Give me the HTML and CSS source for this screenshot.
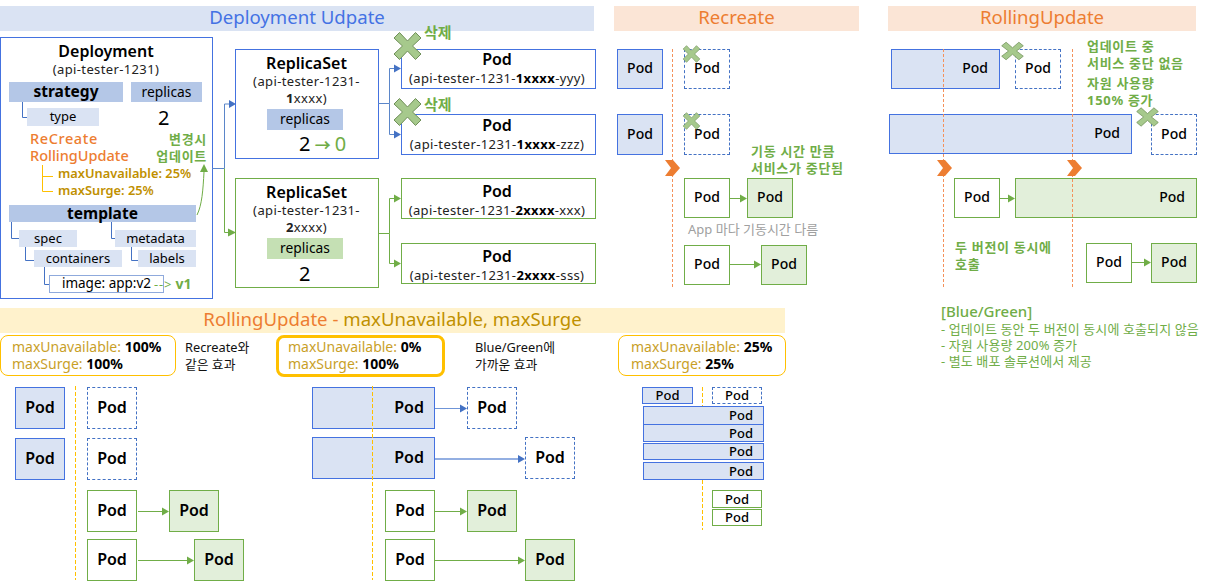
FILE: index.html
```html
<!DOCTYPE html>
<html lang="ko">
<head>
<meta charset="utf-8">
<title>Deployment Update</title>
<link rel="stylesheet" href="styles.css">
</head>
<body>
<div class="stage">
  <header class="title-row">
    <h2 class="title t-deploy">Deployment Udpate</h2>
    <h2 class="title t-recreate">Recreate</h2>
    <h2 class="title t-rolling">RollingUpdate</h2>
  </header>
  <h2 class="title t-params"><span class="orange">RollingUpdate - </span><span class="gold">maxUnavailable, maxSurge</span></h2>

  <div class="canvas">
    <!-- Deployment tree -->
    <div class="box blue-line deployment"></div>
    <div class="txt head dp-name">Deployment</div>
    <div class="txt sub dp-sub">(api-tester-1231)</div>
    <div class="bar mid strategy">strategy</div>
    <div class="bar mid-thin replicas-a">replicas</div>
    <div class="bar light type">type</div>
    <div class="txt big two-a">2</div>
    <div class="txt orange-t recreate">ReCreate</div>
    <div class="txt orange-t rolling">RollingUpdate</div>
    <div class="txt note note-change">변경시<br>업데이트</div>
    <div class="txt gold-b mu">maxUnavailable: 25%</div>
    <div class="txt gold-b ms">maxSurge: 25%</div>
    <div class="bar mid template">template</div>
    <div class="bar light spec">spec</div>
    <div class="bar light metadata">metadata</div>
    <div class="bar light containers">containers</div>
    <div class="bar light labels">labels</div>
    <div class="bar image">image: app:v2</div>
    <div class="txt v1"><span>--&gt;</span> <b>v1</b></div>

    <!-- ReplicaSets -->
    <div class="box blue-line rs rs1"></div>
    <div class="txt head rs-name rs1-name">ReplicaSet</div>
    <div class="txt sub rs-sub rs1-sub">(api-tester-1231-<br><b>1</b>xxxx)</div>
    <div class="bar mid-thin rs-rep rs1-rep">replicas</div>
    <div class="txt big count-a">2 <span class="grn-arrow">→</span> <span class="grn">0</span></div>

    <div class="box green-line rs rs2"></div>
    <div class="txt head rs-name rs2-name">ReplicaSet</div>
    <div class="txt sub rs-sub rs2-sub">(api-tester-1231-<br><b>2</b>xxxx)</div>
    <div class="bar green-bar rs-rep rs2-rep">replicas</div>
    <div class="txt big count-b">2</div>

    <!-- Pods of the ReplicaSets -->
    <div class="box blue-line lp lp1"><b>Pod</b><span>(api-tester-1231-<em>1xxxx</em>-yyy)</span></div>
    <div class="box blue-line lp lp2"><b>Pod</b><span>(api-tester-1231-<em>1xxxx</em>-zzz)</span></div>
    <div class="box green-line lp lp3"><b>Pod</b><span>(api-tester-1231-<em>2xxxx</em>-xxx)</span></div>
    <div class="box green-line lp lp4"><b>Pod</b><span>(api-tester-1231-<em>2xxxx</em>-sss)</span></div>
    <div class="txt note del del1">삭제</div>
    <div class="txt note del del2">삭제</div>

    <!-- Recreate -->
    <div class="pod old a1">Pod</div>
    <div class="pod old a2">Pod</div>
    <div class="pod gone a3">Pod</div>
    <div class="pod gone a4">Pod</div>
    <div class="pod next a5">Pod</div>
    <div class="pod new a6">Pod</div>
    <div class="pod next a7">Pod</div>
    <div class="pod new a8">Pod</div>
    <div class="txt note note-down">기동 시간 만큼<br>서비스가 중단됨</div>
    <div class="txt gray-note">App 마다 기동시간 다름</div>

    <!-- RollingUpdate -->
    <div class="pod old wide b1">Pod</div>
    <div class="pod gone b2">Pod</div>
    <div class="pod old wide b3">Pod</div>
    <div class="pod gone b4">Pod</div>
    <div class="pod next b5">Pod</div>
    <div class="pod new wide b6">Pod</div>
    <div class="pod next b7">Pod</div>
    <div class="pod new b8">Pod</div>
    <div class="txt note note-up">업데이트 중<br>서비스 중단 없음</div>
    <div class="txt note note-res">자원 사용량<br>150% 증가</div>
    <div class="txt note note-two">두 버전이 동시에<br>호출</div>
    <div class="txt bg-title">[Blue/Green]</div>
    <div class="txt bg-list">- 업데이트 동안 두 버전이 동시에 호출되지 않음<br>- 자원 사용량 200% 증가<br>- 별도 배포 솔루션에서 제공</div>

    <!-- Parameter cards -->
    <div class="card c1"><p><span>maxUnavailable:</span> <b>100%</b></p><p><span>maxSurge:</span> <b>100%</b></p></div>
    <div class="txt remark r1">Recreate와<br>같은 효과</div>
    <div class="card strong c2"><p><span>maxUnavailable:</span> <b>0%</b></p><p><span>maxSurge:</span> <b>100%</b></p></div>
    <div class="txt remark r2">Blue/Green에<br>가까운 효과</div>
    <div class="card c3"><p><span>maxUnavailable:</span> <b>25%</b></p><p><span>maxSurge:</span> <b>25%</b></p></div>

    <!-- Scenario 100/100 -->
    <div class="pod lg old d1">Pod</div>
    <div class="pod lg old d2">Pod</div>
    <div class="pod lg gone d3">Pod</div>
    <div class="pod lg gone d4">Pod</div>
    <div class="pod lg next d5">Pod</div>
    <div class="pod lg new d6">Pod</div>
    <div class="pod lg next d7">Pod</div>
    <div class="pod lg new d8">Pod</div>

    <!-- Scenario 0/100 -->
    <div class="pod lg old wide e1">Pod</div>
    <div class="pod lg gone e2">Pod</div>
    <div class="pod lg old wide e3">Pod</div>
    <div class="pod lg gone e4">Pod</div>
    <div class="pod lg next e5">Pod</div>
    <div class="pod lg new e6">Pod</div>
    <div class="pod lg next e7">Pod</div>
    <div class="pod lg new e8">Pod</div>

    <!-- Scenario 25/25 -->
    <div class="pod sm old f1">Pod</div>
    <div class="pod sm gone f2">Pod</div>
    <div class="pod sm old wide f3">Pod</div>
    <div class="pod sm old wide f4">Pod</div>
    <div class="pod sm old wide f5">Pod</div>
    <div class="pod sm old wide f6">Pod</div>
    <div class="pod sm next f7">Pod</div>
    <div class="pod sm next f8">Pod</div>

    <!-- Connectors, timelines and marks -->
    <svg class="wires" width="1230" height="583" viewBox="0 0 1230 583" aria-hidden="true">
      <defs>
        <path id="x2" d="M-8 -13.5 L0 -5 L8 -13.5 L13.5 -8 L5 0 L13.5 8 L8 13.5 L0 5 L-8 13.5 L-13.5 8 L-5 0 L-13.5 -8 Z"/>
        <path id="chev" d="M0 0 H8 L15 8 L8 16 H0 L6 8 Z"/>
      </defs>

      <g class="s-blue">
        <path d="M22.5 102V117.5H27M11.5 222V238.5H19M111.5 222V238.5H115M25.5 247V260.5H34M131.5 247V260.5H138M44.5 267V284.5H49"/>
      </g>
      <g class="s-yellow"><path d="M42.5 165V191.5H53M42.5 176.5H53"/></g>
      <path class="s-green-line" d="M197 215C202 205 203 190 204 172"/>
      <path class="f-green" d="M204 164L208 172H200Z"/>

      <path class="s-steel" d="M212 168.5H224.5V104H229"/>
      <path class="f-steel" d="M229 100L236 104L229 108Z"/>
      <path class="s-green-line" d="M224.5 168.5V232.5H229"/>
      <path class="f-green" d="M228 228.5L236 232.5L228 236.5Z"/>

      <path class="s-steel" d="M378 103.5H389.5V68.5H394M389.5 103.5V134.5H394"/>
      <path class="f-steel" d="M394 64.5L401 68.5L394 72.5ZM394 130.5L401 134.5L394 138.5Z"/>
      <path class="s-green-line" d="M378 233.5H389.5V198.5H394M389.5 233.5V263.5H394"/>
      <path class="f-green" d="M394 194.5L401 198.5L394 202.5ZM394 259.5L401 263.5L394 267.5Z"/>

      <g class="s-orange-dash">
        <path d="M672.5 49V287M943.5 49V287M1072.5 49V287"/>
      </g>
      <g class="s-yellow-dash">
        <path d="M75.5 386V580M372.5 386V580M702.5 387V406M702.5 480V530"/>
      </g>

      <g class="s-green-line">
        <path d="M730 198.5H741M730 264.5H755M1000 198.5H1009M1132 262.5H1145M138 511.5H163M138 560.5H188M435 511.5H461M435 560.5H519"/>
      </g>
      <g class="f-green">
        <path d="M740 194.5L747 198.5L740 202.5ZM754 260.5L761 264.5L754 268.5ZM1008 194.5L1015 198.5L1008 202.5ZM1144 258.5L1151 262.5L1144 266.5ZM162 507.5L169 511.5L162 515.5ZM187 556.5L194 560.5L187 564.5ZM460 507.5L467 511.5L460 515.5ZM518 556.5L525 560.5L518 564.5Z"/>
      </g>
      <path class="s-arrow-blue" d="M435 408.5H461"/>
      <path class="s-arrow-blue thick" d="M435 459H519"/>
      <path class="f-steel" d="M460 404.5L467 408.5L460 412.5ZM518 455L525 459L518 463Z"/>

      <g class="f-orange">
        <use href="#chev" x="665" y="160"/>
        <use href="#chev" x="937" y="160"/>
        <use href="#chev" x="1067" y="160"/>
      </g>

      <g class="f-cross">
        <use href="#x2" transform="translate(407.5 46)"/>
        <use href="#x2" transform="translate(407.5 112)"/>
        <use href="#x2" transform="translate(691.5 54) scale(.62)"/>
        <use href="#x2" transform="translate(691.5 121) scale(.62)"/>
        <use href="#x2" transform="translate(1012.5 51) scale(.8 .65)"/>
        <use href="#x2" transform="translate(1147.5 117) scale(.8 .68)"/>
      </g>
    </svg>
  </div>
</div>
</body>
</html>
```

FILE: styles.css
```css
* { box-sizing: border-box; margin: 0; padding: 0; }
html, body { background: #fff; }
body {
  font-family: "Noto Sans", "Noto Sans CJK KR", sans-serif;
  color: #000;
  overflow: hidden;
}
.stage { position: relative; width: 1230px; height: 583px; overflow: hidden; }

/* Section titles */
.title-row { display: flex; padding-top: 6px; }
.title {
  height: 25px;
  font-size: 18.6px;
  font-weight: 400;
  line-height: 22px;
  text-align: center;
}
.t-deploy { width: 594px; background: #dae3f3; color: #4472e4; }
.t-recreate { width: 245px; margin-left: 20px; background: #fbe5d6; color: #ed7d31; }
.t-rolling { width: 308px; margin-left: 29px; background: #fbe5d6; color: #ed7d31; }
.t-params { width: 785px; margin-top: 277px; background: #fff2cc; }
.orange { color: #ed7d31; }
.gold { color: #bf9000; }

/* Free diagram canvas */
.canvas { position: absolute; inset: 0; }
.canvas > * { position: absolute; }
.wires { left: 0; top: 0; pointer-events: none; fill: none; }

.txt { white-space: nowrap; }
.head { font-size: 16px; font-weight: 600; line-height: 20px; text-align: center; }
.sub { font-size: 13px; letter-spacing: .37px; line-height: 17px; text-align: center; color: #222; }
.big { font-size: 20px; line-height: 24px; }
.orange-t { font-size: 14.5px; line-height: 16px; color: #ed7d31; font-weight: 500; left: 30px; }
.note { font-size: 13px; letter-spacing: .7px; font-weight: 700; line-height: 16.5px; color: #70ad47; }
.gold-b { font-size: 12.8px; font-weight: 600; line-height: 16px; color: #bf9000; left: 58px; }

.box { border: 1px solid; background: #fff; }
.blue-line { border-color: #4472e0; }
.green-line { border-color: #70ad47; }

.bar { display: flex; align-items: center; justify-content: center; white-space: nowrap; padding-bottom: 2px; }
.mid { background: #b4c7e7; font-size: 15.5px; font-weight: 700; }
.mid-thin { background: #b4c7e7; font-size: 13.8px; }
.light { background: #dae3f3; font-size: 13px; }
.green-bar { background: #c5e0b4; font-size: 13.8px; }

/* Deployment */
.deployment { left: 0; top: 37px; width: 213px; height: 262px; background: transparent; }
.dp-name { left: 0; width: 212px; top: 41px; }
.dp-sub { left: 0; width: 212px; top: 61px; }
.strategy { left: 9px; top: 82px; width: 114px; height: 20px; }
.replicas-a { left: 131px; top: 82px; width: 71px; height: 20px; }
.type { left: 27px; top: 108px; width: 72px; height: 18px; }
.two-a { left: 158px; top: 106px; }
.recreate { top: 130px; letter-spacing: .6px; }
.rolling { top: 147px; }
.note-change { right: 1023px; top: 131px; text-align: right; }
.mu { top: 165px; }
.ms { top: 182px; }
.template { left: 9px; top: 205px; width: 187px; height: 17px; }
.spec { left: 19px; top: 230px; width: 58px; height: 17px; }
.metadata { left: 115px; top: 230px; width: 81px; height: 17px; }
.containers { left: 34px; top: 250px; width: 88px; height: 17px; }
.labels { left: 138px; top: 250px; width: 58px; height: 17px; }
.image {
  left: 49px; top: 275px; width: 115px; height: 18px;
  border: 1px solid #8faadc; background: #fff; font-size: 13.5px;
}
.v1 { left: 154px; top: 275px; font-size: 13px; line-height: 18px; color: #70ad47; font-variant-ligatures: none; }
.v1 span { letter-spacing: .8px; }
.v1 b { font-size: 14px; }

/* ReplicaSets */
.rs { left: 235px; width: 144px; height: 110px; }
.rs1 { top: 49px; }
.rs2 { top: 178px; }
.rs-name, .rs-sub { left: 235px; width: 143px; }
.rs1-name { top: 53px; }
.rs1-sub { top: 73px; }
.rs2-name { top: 182px; }
.rs2-sub { top: 202px; }
.rs-rep { left: 267px; width: 76px; height: 21px; }
.rs1-rep { top: 109px; }
.rs2-rep { top: 238px; }
.count-a { left: 299px; top: 132px; word-spacing: -1px; }
.count-b { left: 299px; top: 262px; }
.grn { color: #70ad47; }
.grn-arrow { color: #70ad47; font-size: 16px; font-weight: 700; }

/* Pods of the ReplicaSets */
.lp {
  left: 401px; width: 195px;
  display: flex; flex-direction: column; align-items: center;
  padding-right: 3px;
}
.lp b { font-size: 16px; line-height: 19px; font-weight: 600; }
.lp span { font-size: 13px; letter-spacing: .37px; line-height: 18px; color: #222; }
.lp em { font-style: normal; font-weight: 700; color: #000; }
.lp1 { top: 49px; height: 40px; }
.lp2 { top: 114px; height: 41px; padding-top: 1px; }
.lp3 { top: 178px; height: 41px; padding-top: 3px; }
.lp4 { top: 243px; height: 41px; padding-top: 3px; }
.del { left: 424px; font-size: 15px; letter-spacing: 0; line-height: 18px; }
.del1 { top: 23px; }
.del2 { top: 95px; }

/* Pod states */
.pod {
  display: flex; align-items: center; justify-content: center;
  width: 46px; height: 40px;
  border: 1px solid #4472e0;
  background: #fff;
  font-size: 14px;
  font-weight: 500;
  padding-bottom: 3px;
}
.old { background: #dae3f3; }
.gone { border: 1px dashed #4472c4; background: transparent; }
.next { border-color: #70ad47; }
.new { border-color: #70ad47; background: #e2efda; }
.wide { justify-content: flex-end; padding-right: 11px; }
.lg { width: 50px; height: 42px; font-size: 16px; font-weight: 600; padding-bottom: 3px; }
.sm { width: 50px; height: 17px; font-size: 13px; padding-bottom: 1px; }

/* Recreate pods */
.a1 { left: 617px; top: 49px; }
.a2 { left: 617px; top: 114px; height: 41px; }
.a3 { left: 684px; top: 49px; }
.a4 { left: 684px; top: 114px; height: 41px; }
.a5 { left: 684px; top: 178px; }
.a6 { left: 747px; top: 178px; }
.a7 { left: 684px; top: 245px; }
.a8 { left: 761px; top: 245px; }
.note-down { left: 751px; top: 143px; }
.gray-note { left: 688px; top: 221px; font-size: 13px; line-height: 17px; color: #a0a0a0; }

/* RollingUpdate pods */
.b1 { left: 891px; top: 49px; width: 109px; }
.b2 { left: 1015px; top: 49px; }
.b3 { left: 889px; top: 114px; width: 243px; }
.b4 { left: 1151px; top: 114px; height: 41px; }
.b5 { left: 954px; top: 178px; }
.b6 { left: 1015px; top: 178px; width: 182px; }
.b7 { left: 1086px; top: 243px; }
.b8 { left: 1151px; top: 243px; }
.note-up { left: 1087px; top: 38px; }
.note-res { left: 1087px; top: 75px; }
.note-two { left: 955px; top: 239px; }
.bg-title { left: 941px; top: 301px; font-size: 15px; line-height: 20px; font-weight: 500; color: #70ad47; }
.bg-list { left: 941px; top: 321px; font-size: 13px; letter-spacing: .1px; line-height: 16px; color: #70ad47; }

/* Parameter cards */
.card {
  top: 335px; height: 41px; width: 168px;
  border: 1px solid #ffc000; border-radius: 8px;
  background: #fff;
  padding: 2px 0 0 11px;
  font-size: 14px; line-height: 17px;
}
.card span { color: #bf9000; opacity: .85; }
.card b { font-weight: 700; }
.c1 { left: 0; width: 176px; }
.c2 { left: 276px; width: 169px; height: 42px; border-width: 3px; padding-top: 0; padding-left: 9px; }
.c3 { left: 618px; padding-left: 12px; }
.remark { font-size: 12.8px; line-height: 16.5px; color: #111; top: 339px; }
.r1 { left: 185px; }
.r2 { left: 475px; }

/* Scenario 100/100 */
.d1 { left: 15px; top: 387px; }
.d2 { left: 15px; top: 438px; }
.d3 { left: 87px; top: 387px; }
.d4 { left: 87px; top: 438px; }
.d5 { left: 87px; top: 490px; }
.d6 { left: 169px; top: 490px; }
.d7 { left: 87px; top: 539px; }
.d8 { left: 194px; top: 539px; }

/* Scenario 0/100 */
.e1 { left: 312px; top: 387px; width: 123px; }
.e2 { left: 467px; top: 387px; }
.e3 { left: 312px; top: 437px; width: 123px; }
.e4 { left: 525px; top: 437px; }
.e5 { left: 385px; top: 490px; }
.e6 { left: 467px; top: 490px; }
.e7 { left: 385px; top: 539px; }
.e8 { left: 525px; top: 539px; }
.e1, .e3 { padding-right: 10px; }

/* Scenario 25/25 */
.f1 { left: 642px; top: 387px; width: 51px; }
.f2 { left: 712px; top: 387px; }
.f3 { left: 643px; top: 406px; width: 121px; height: 19px; }
.f4 { left: 643px; top: 424px; width: 121px; height: 18px; }
.f5 { left: 643px; top: 443px; width: 121px; }
.f6 { left: 643px; top: 462px; width: 121px; height: 18px; }
.f7 { left: 712px; top: 490px; height: 18px; }
.f8 { left: 712px; top: 509px; }
.f3, .f4, .f5, .f6 { padding-right: 10px; }

/* SVG paints */
.s-blue path { stroke: #4472c4; stroke-width: 1; }
.s-yellow path { stroke: #ffc000; stroke-width: 1; }
.s-green-line, .s-green-line path { stroke: #70ad47; stroke-width: 1; }
.s-steel { stroke: #5b86c9; stroke-width: 1; }
.s-arrow-blue { stroke: #6f95d8; stroke-width: 1; }
.s-arrow-blue.thick { stroke-width: 1.6; }
.s-orange-dash path { stroke: #f4915a; stroke-width: 1; stroke-dasharray: 3 2; }
.s-yellow-dash path { stroke: #ffc000; stroke-width: 1; stroke-dasharray: 4 2; }
.f-green, .f-green path { fill: #70ad47; }
.f-steel { fill: #4472c4; }
.f-orange use { fill: #ed7d31; }
.f-cross use { fill: #a6c98c; stroke: #6f8f58; stroke-width: 1; }
```
